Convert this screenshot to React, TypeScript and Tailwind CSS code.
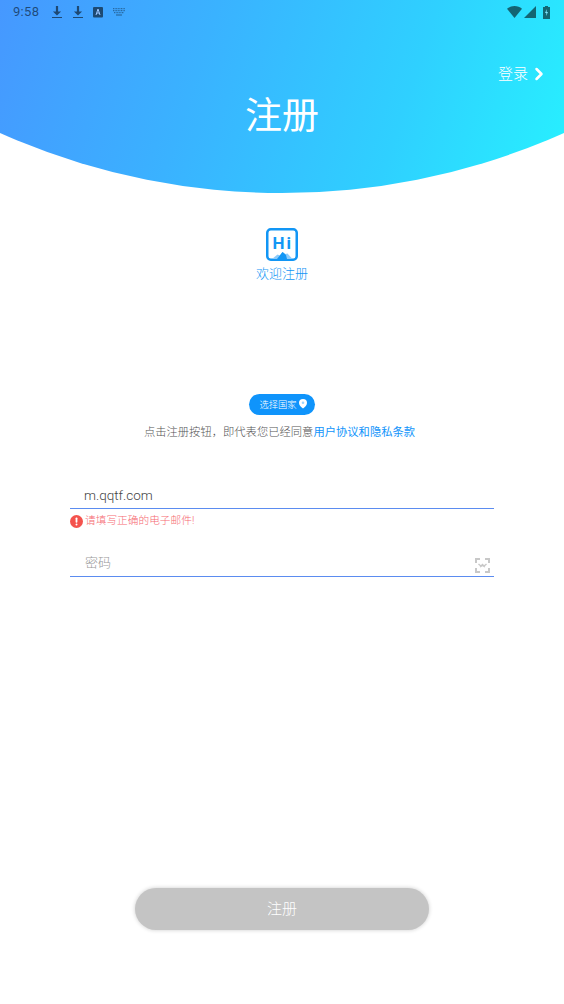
import { ChevronRight } from "lucide-react";

const cjk = "font-['Roboto','Noto_Sans_CJK_SC',sans-serif]";

function StatusBar() {
  return (
    <div className="flex h-[24px] items-center justify-between pl-[13px] pr-[14px] text-black/55">
      <div className="flex items-center">
        <span className="w-[38px] font-['Roboto',sans-serif] text-[13px] tracking-[0.3px]">9:58</span>
        <svg width="10" height="13" viewBox="0 0 10 13" className="ml-[1px]" fill="currentColor">
          <path d="M3.900 0h2.200v5.500h3L5 9.500.9 5.500h3z" />
          <rect x="0" y="11" width="10" height="1" />
        </svg>
        <svg width="10" height="13" viewBox="0 0 10 13" className="ml-[11px]" fill="currentColor">
          <path d="M3.900 0h2.200v5.500h3L5 9.500.9 5.500h3z" />
          <rect x="0" y="11" width="10" height="1" />
        </svg>
        <svg width="10" height="11" viewBox="0 0 10 11" className="ml-[10px]">
          <rect width="10" height="10.500" rx="1" fill="currentColor" />
          <path d="M3 8l2-6 2 6M3.800 6h2.400" stroke="#9cc4ff" strokeWidth="1" fill="none" />
        </svg>
        <svg width="12" height="8" viewBox="0 0 12 8" className="ml-[10px] opacity-80" fill="none" stroke="currentColor">
          <path d="M0 .7h12M0 2.700h12M1 4.700h10" strokeWidth="1" strokeDasharray="1 .6" />
          <path d="M3 7h6" strokeWidth="1" />
        </svg>
      </div>
      <div className="flex items-center">
        <svg width="15" height="12" viewBox="0 0 15 12" fill="currentColor">
          <path d="M0 2.800C2 1 4.600 0 7.500 0S13 1 15 2.800L7.500 12z" />
        </svg>
        <svg width="12" height="12" viewBox="0 0 12 12" className="ml-[2px]" fill="currentColor">
          <path d="M12 0v12H0z" />
        </svg>
        <svg width="7" height="13" viewBox="0 0 7 13" className="ml-[7px]">
          <path d="M2 0h3v1h2v12H0V1h2z" fill="currentColor" />
          <path d="M4 3L2 7h1.400L3 10l2-4H3.600z" fill="#7fe6ff" />
        </svg>
      </div>
    </div>
  );
}

function HiLogo() {
  return (
    <svg width="32" height="33" viewBox="0 0 32 33">
      <rect x="1.250" y="1.250" width="29.500" height="30.500" rx="3.500" fill="#fff" stroke="#1296f5" strokeWidth="2.500" />
      <text x="6.500" y="21" fontFamily="Roboto, sans-serif" fontWeight="700" fontSize="17" letterSpacing="2" fill="#1296f5">
        Hi
      </text>
      <path d="M6 31l5.500-4.500 2.500 1 2.500-3.500 3 2 2-.5 5 5.500z" fill="#8ccbfa" />
      <path d="M11 31l5.500-7 3.500 3 1 4z" fill="#1296f5" />
    </svg>
  );
}

export default function App() {
  return (
    <div className={`flex h-[1004px] w-[564px] flex-col overflow-hidden bg-white ${cjk}`}>
      <header className="h-[193px] shrink-0 bg-[linear-gradient(108deg,#4698ff_0%,#3ab2ff_35%,#2fd0ff_70%,#27f1ff_100%)] [clip-path:circle(693px_at_50%_-500px)]">
        <StatusBar />
        <div className="mt-[39px] flex h-[22px] items-center justify-end pr-[15px] text-white">
          <span className="text-[15px] font-light leading-none">登录</span>
          <ChevronRight size={20} strokeWidth={3} className="ml-[1px]" />
        </div>
        <h1 className="mt-[5px] text-center text-[37px] font-normal leading-[54px] text-white">注册</h1>
      </header>

      <div className="mt-[35px] flex flex-col items-center">
        <HiLogo />
        <p className="mt-[3px] text-[13px] font-light leading-[20px] text-[#1296f5]">欢迎注册</p>
      </div>

      <div className="mt-[110px] flex flex-col items-center">
        <button className="flex h-[21px] w-[66px] items-center justify-center rounded-full bg-[#0f94fb] pl-[2px] text-[9.300px] font-light text-white">
          选择国家
          <svg width="8" height="10" viewBox="0 0 8 10" className="ml-[2px] -mt-[2px]" fill="#fff">
            <path d="M4 0a4 4 0 0 1 4 4c0 2.500-2.500 4.500-4 5.500C2.500 8.500 0 6.500 0 4a4 4 0 0 1 4-4z" />
            <circle cx="4" cy="3.800" r="1.300" fill="#9fd4fd" />
          </svg>
        </button>
        <p className="mt-[8px] mr-[5px] whitespace-nowrap text-[11.300px] font-light leading-[20px] text-[#555]">
          点击注册按钮，即代表您已经同意<span className="font-normal text-[#0f94fb]">用户协议和隐私条款</span>
        </p>
      </div>

      <div className="mt-[39px] px-[70px]">
        <div className="flex h-[27px] items-center border-b border-b-[#5b8cf0] pl-[14px] text-[13.500px] font-light text-[#444]">
          m.qqtf.com
        </div>
        <div className="mt-[4px] flex h-[16px] items-center text-[10.700px] font-light text-[#f66a72]">
          <svg width="13" height="13" viewBox="0 0 13 13" className="mr-[2px]">
            <circle cx="6.500" cy="6.500" r="6.500" fill="#f4524d" />
            <rect x="5.600" y="2.500" width="1.800" height="5.200" rx="0.800" fill="#fff" />
            <circle cx="6.500" cy="9.500" r="1" fill="#fff" />
          </svg>
          请填写正确的电子邮件!
        </div>
        <div className="mt-[21px] flex h-[27px] items-center justify-between border-b border-b-[#5b8cf0] pl-[15px] text-[13px] font-light text-[#999]">
          密码
          <svg width="15" height="15" viewBox="0 0 15 15" className="-mb-[5px] mr-[4px]" fill="none" stroke="#c8c8c8" strokeWidth="2">
            <path d="M1 5V1h4M10 1h4v4M14 10v4h-4M5 14H1v-4" />
            <path d="M3.500 6c2 2 2.500 2 4 .5 1.500 1.500 2 1.500 4-.5M5 9l2.500-1.500L10 9" strokeWidth="1.300" />
          </svg>
        </div>
      </div>

      <div className="mt-auto mb-[74px] flex justify-center">
        <button className="h-[42px] w-[294px] rounded-full bg-[#c4c4c4] text-[15px] font-light text-white shadow-[0_0_4px_rgba(0,0,0,0.2)]">
          注册
        </button>
      </div>
    </div>
  );
}
